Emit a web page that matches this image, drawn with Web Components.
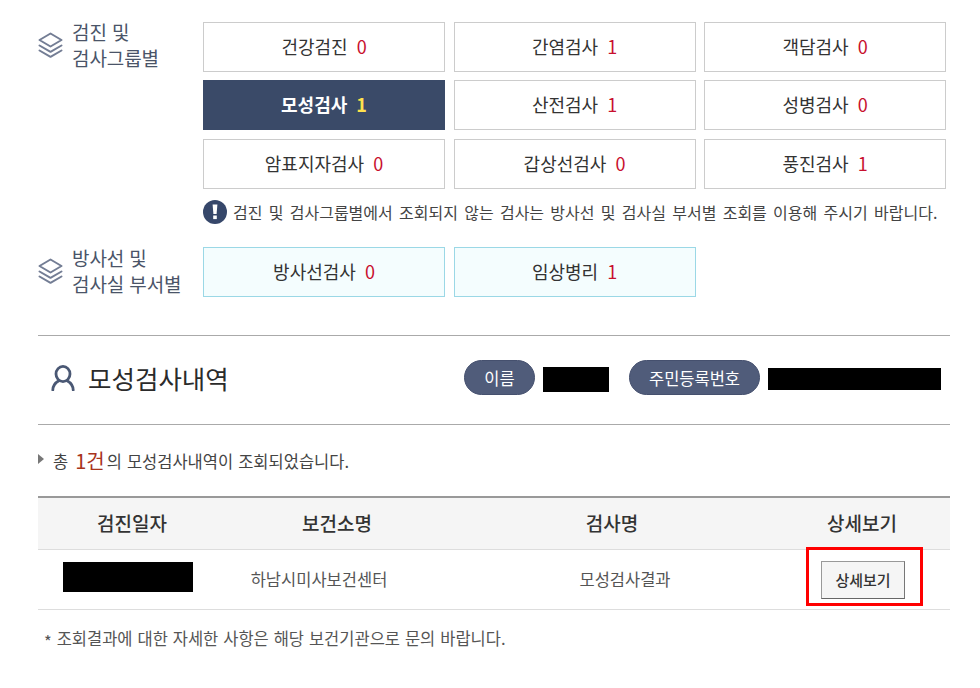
<!DOCTYPE html>
<html lang="ko">
<head>
<meta charset="utf-8">
<title>모성검사내역</title>
<style>
  html, body { margin: 0; background: #fff; }
  body { font-family: "Noto Sans CJK KR", "Noto Sans", sans-serif; color: #333; }
  exam-group.dept { margin-top: 23px; }
</style>
</head>
<body>
<result-page>
  <exam-group label="검진 및<br>검사그룹별">
    <exam-cell name="건강검진" count="0"></exam-cell>
    <exam-cell name="간염검사" count="1"></exam-cell>
    <exam-cell name="객담검사" count="0"></exam-cell>
    <exam-cell name="모성검사" count="1" active></exam-cell>
    <exam-cell name="산전검사" count="1"></exam-cell>
    <exam-cell name="성병검사" count="0"></exam-cell>
    <exam-cell name="암표지자검사" count="0"></exam-cell>
    <exam-cell name="갑상선검사" count="0"></exam-cell>
    <exam-cell name="풍진검사" count="1"></exam-cell>
  </exam-group>
  <notice-line>검진 및 검사그룹별에서 조회되지 않는 검사는 방사선 및 검사실 부서별 조회를 이용해 주시기 바랍니다.</notice-line>
  <exam-group label="방사선 및<br>검사실 부서별" class="dept">
    <exam-cell name="방사선검사" count="0" tint></exam-cell>
    <exam-cell name="임상병리" count="1" tint></exam-cell>
  </exam-group>
  <result-head></result-head>
  <result-table></result-table>
</result-page>

<script>
(function() {
    const LAYERS = `<svg width="25" height="26" viewBox="0 0 25 26" fill="none" stroke="#737d94" stroke-width="2" stroke-linejoin="round" stroke-linecap="round">
        <path d="M12.5 1.5 L23.5 8 L12.5 14.5 L1.5 8 Z"/>
        <path d="M1.5 13.5 L12.5 19.8 L23.5 13.5"/>
        <path d="M1.5 18.5 L12.5 24.8 L23.5 18.5"/>
    </svg>`;

    class ResultPage extends HTMLElement {
        constructor() {
            super();
            this.attachShadow({ mode: 'open' }).innerHTML = `
            <style>
                :host { display: block; width: 912px; padding: 22px 30px 0 38px; box-sizing: content-box; }
            </style>
            <slot></slot>`;
        }
    }

    class ExamGroup extends HTMLElement {
        constructor() {
            super();
            this.attachShadow({ mode: 'open' }).innerHTML = `
            <style>
                :host { display: flex; align-items: flex-start; }
                .label { width: 165px; height: 46px; display: flex; gap: 9px; align-items: center; flex: none; }
                :host(.dept) .label { height: 48px; }
                .icon { width: 25px; height: 26px; flex: none; }
                .text { font-size: 19px; line-height: 26px; color: #4a5468; white-space: nowrap; letter-spacing: -0.1px; }
                .grid { display: grid; grid-template-columns: repeat(3, 242px); column-gap: 8.5px; row-gap: 8.4px; }
            </style>
            <div class="label"><span class="icon">${LAYERS}</span><span class="text">${this.getAttribute('label')}</span></div>
            <div class="grid"><slot></slot></div>`;
        }
    }

    class ExamCell extends HTMLElement {
        constructor() {
            super();
            this.attachShadow({ mode: 'open' }).innerHTML = `
            <style>
                :host { display: flex; height: 50px; box-sizing: border-box; border: 1px solid #ccc; background: #fff; padding-bottom: 2px;
                    align-items: center; justify-content: center; gap: 9px; font-size: 18px; color: #333; white-space: nowrap; }
                :host([active]) { background: #3a4a68; border-color: #3a4a68; color: #fff; font-weight: 700; }
                :host([tint]) { background: #f4fdfe; border-color: #9bd8e6; }
                .n { color: #c8102e; }
                :host([active]) .n { color: #ffe14d; }
            </style>
            <span>${this.getAttribute('name')}</span><span class="n">${this.getAttribute('count')}</span>`;
        }
    }

    class NoticeLine extends HTMLElement {
        constructor() {
            super();
            this.attachShadow({ mode: 'open' }).innerHTML = `
            <style>
                :host { display: flex; align-items: center; gap: 6px; margin: 11px 0 0 165px; height: 24px;
                    font-size: 16px; word-spacing: 1.8px; color: #444; white-space: nowrap; }
                .ico { width: 24px; height: 24px; border-radius: 50%; background: #36476a; color: #fff; flex: none;
                    display: flex; align-items: center; justify-content: center; }
            </style>
            <span class="ico"><svg width="6" height="16" viewBox="0 0 6 16" fill="#fff"><path d="M0.6 0.5 H5.4 L4.6 10 H1.4 Z"/><rect x="1.2" y="11.5" width="3.6" height="3.6"/></svg></span>
            <span><slot></slot></span>`;
        }
    }

    class ResultHead extends HTMLElement {
        constructor() {
            super();
            this.attachShadow({ mode: 'open' }).innerHTML = `
            <style>
                :host { display: flex; align-items: center; height: 88px; margin-top: 38px; padding-bottom: 0;
                    border-top: 1px solid #aaa; border-bottom: 1px solid #aaa; white-space: nowrap; }
                .user { margin: -4px 0 0 13px; width: 24px; height: 26px; flex: none; }
                h2 { margin: -4px 0 0 13px; font-size: 25.5px; font-weight: 400; color: #2b2b2b; width: 376px; flex: none; }
                .pill { height: 35px; margin-top: -4px; border-radius: 18px; background: #505c7a; color: #fff; font-size: 16.5px;
                    display: flex; align-items: center; justify-content: center; box-sizing: border-box; border: 1px solid #45506e; flex: none; }
                .mask { background: #000; flex: none; margin: -1px 0 0 8px; }
            </style>
            <svg class="user" viewBox="0 0 24 26" fill="none" stroke="#4a5874" stroke-width="2.8" stroke-linecap="round">
                <ellipse cx="12" cy="9" rx="7" ry="7.6"/>
                <path d="M1.8 25 C2 20.4 5 17.4 7.8 15.8 M22.2 25 C22 20.4 19 17.4 16.2 15.8"/>
            </svg>
            <h2>모성검사내역</h2>
            <span class="pill" style="width:71px">이름</span>
            <span class="mask" style="width:66px;height:25px"></span>
            <span class="pill" style="width:131px;margin-left:20px">주민등록번호</span>
            <span class="mask" style="width:173px;height:22px"></span>`;
        }
    }

    class ResultTable extends HTMLElement {
        constructor() {
            super();
            this.attachShadow({ mode: 'open' }).innerHTML = `
            <style>
                :host { display: block; position: relative; }
                .count { display: flex; align-items: center; height: 24px; margin-top: 24px; font-size: 16.5px; word-spacing: 0.4px; color: #444; white-space: nowrap; }
                .tri { width: 0; height: 0; border-left: 6px solid #777; border-top: 5px solid transparent; border-bottom: 5px solid transparent; margin: -4px 9px 0 0; }
                .count b { font-weight: 400; color: #a8341c; font-size: 20px; margin: 0 2px 0 7px; }
                .row { display: grid; align-items: center; justify-items: center; }
                .th { grid-template-columns: 188px 222px 328px 172px; margin-top: 23px; height: 50px; padding-bottom: 1px; box-sizing: content-box;
                    border-top: 2px solid #999; border-bottom: 1px solid #ddd; background: #f5f5f5;
                    font-size: 19px; font-weight: 500; color: #333; }
                .td { grid-template-columns: 180px 202px 356px 174px; height: 59px; border-bottom: 1px solid #ddd; font-size: 16.5px; color: #555; }
                .td .c3 { margin-left: 54px; }
                .mask { width: 130px; height: 30px; background: #000; margin-bottom: 4px; }
                button { width: 84px; height: 38px; margin-top: 1px; padding: 0; background: #f5f5f5; border: 1px solid #999; border-bottom-color: #666; border-right-color: #777;
                    font: 500 15px "Noto Sans CJK KR", sans-serif; color: #333; }
                .red { position: absolute; left: 768px; top: 98px; width: 117px; height: 59px; box-sizing: border-box; border: 3px solid #f00; pointer-events: none; }
                .note { margin-top: 16px; font-size: 16.5px; word-spacing: 0.3px; color: #555; white-space: nowrap; padding-left: 6px; }
                .star { vertical-align: -3px; }
            </style>
            <div class="count"><span class="tri"></span>총 <b>1건</b>의 모성검사내역이 조회되었습니다.</div>
            <div class="row th"><span>검진일자</span><span>보건소명</span><span>검사명</span><span>상세보기</span></div>
            <div class="row td"><span class="mask"></span><span>하남시미사보건센터</span><span class="c3">모성검사결과</span><button>상세보기</button></div>
            <div class="red"></div>
            <div class="note"><span class="star">*</span> 조회결과에 대한 자세한 사항은 해당 보건기관으로 문의 바랍니다.</div>`;
        }
    }

    customElements.define('result-page', ResultPage);
    customElements.define('exam-group', ExamGroup);
    customElements.define('exam-cell', ExamCell);
    customElements.define('notice-line', NoticeLine);
    customElements.define('result-head', ResultHead);
    customElements.define('result-table', ResultTable);
})();
</script>
</body>
</html>
